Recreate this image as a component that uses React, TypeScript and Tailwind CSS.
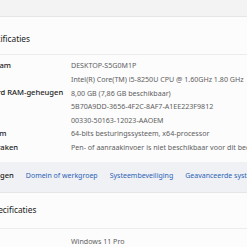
import React from "react";

const specs = [
  { label: "Apparaatnaam", value: "DESKTOP-S5G0M1P" },
  { label: "Processor", value: "Intel(R) Core(TM) i5-8250U CPU @ 1.60GHz   1.80 GHz" },
  { label: "Geïnstalleerd RAM-geheugen", value: "8,00 GB (7,86 GB beschikbaar)" },
  { label: "Apparaat-id", value: "5B70A9DD-3656-4F2C-8AF7-A1EE223F9812" },
  { label: "Product-id", value: "00330-50163-12023-AAOEM" },
  { label: "Type systeem", value: "64-bits besturingssysteem, x64-processor" },
  { label: "Pen en aanraken", value: "Pen- of aanraakinvoer is niet beschikbaar voor dit beeldscherm" },
];

const links = ["Domein of werkgroep", "Systeembeveiliging", "Geavanceerde systeeminstellingen"];

const App = () => {
  return (
    <div
      className="w-[247px] h-[247px] overflow-hidden bg-[#f3f3f3] pt-[16px]"
      style={{ fontFamily: '"Noto Sans", "Open Sans", sans-serif' }}
    >
      <div className="ml-[-43px] w-[460px] border-t border-[#e6e6e6] bg-[#fcfcfc]">
        <div className="h-[38px] pt-[7px] flex items-center border-b border-[#ececec] text-[8.3px] text-[#1b1b1b]">
          <span className="ml-[-10px]">Apparaatspecificaties</span>
        </div>
        <div className="pt-[4px] pb-[8px]">
          {specs.map(s => (
            <div key={s.label} className="flex h-[13.6px] items-center whitespace-nowrap">
              <div className="w-[114px] shrink-0 text-[7.6px] text-[#1b1b1b] font-medium">{s.label}</div>
              <div className="text-[7.1px] text-[#616161]">{s.value}</div>
            </div>
          ))}
        </div>
        <div className="h-[31px] pb-[2px] flex items-center bg-[#eff1f4] border-b border-[#e6e6e6] whitespace-nowrap">
          <div className="ml-[-38px] flex items-center gap-[12px]">
            <span className="text-[7.6px] text-[#1b1b1b] font-medium">Gerelateerde koppelingen</span>
            {links.map(l => (
              <span key={l} className="text-[7px] text-[#2c63b8]">
                {l}
              </span>
            ))}
          </div>
        </div>
        <div className="h-[36px] flex items-center border-b border-[#ececec] text-[8.3px] text-[#1b1b1b]">
          <span className="ml-[-6px]">Windows-specificaties</span>
        </div>
        <div className="pt-[5px]">
          <div className="flex h-[13.6px] items-center whitespace-nowrap">
            <div className="w-[114px] shrink-0 text-[7.6px] text-[#1b1b1b] font-medium">Editie</div>
            <div className="text-[7.1px] text-[#616161]">Windows 11 Pro</div>
          </div>
        </div>
      </div>
    </div>
  );
};

export default App;
